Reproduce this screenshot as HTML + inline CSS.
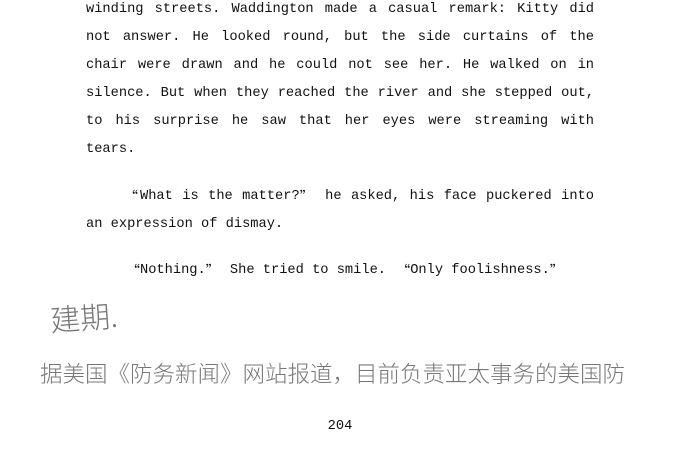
<!DOCTYPE html>
<html><head><meta charset="utf-8"><style>
html,body{margin:0;padding:0;background:#fff;width:680px;height:467px;overflow:hidden;position:relative}
.l{position:absolute;left:86px;width:508px;font-family:"Liberation Mono","Noto Sans CJK SC",monospace;font-size:13.7px;line-height:16px;height:16px;color:#111;white-space:nowrap}
.j{text-align:justify;text-align-last:justify;white-space:normal}
.q{display:inline-block;width:16px;height:16px;line-height:16px;vertical-align:top;font-family:"Noto Sans CJK SC",sans-serif;font-size:14px;overflow:hidden}
.o{text-align:right}.c{text-align:left}
.h{position:absolute;font-family:"Noto Sans CJK SC","WenQuanYi Zen Hei",sans-serif;color:#777;white-space:nowrap;font-weight:300}
</style></head><body>
<div class="l j" style="top:2px">winding streets. Waddington made a casual remark: Kitty did</div>
<div class="l j" style="top:30px">not answer. He looked round, but the side curtains of the</div>
<div class="l j" style="top:58px">chair were drawn and he could not see her. He walked on in</div>
<div class="l j" style="top:86px">silence. But when they reached the river and she stepped out,</div>
<div class="l j" style="top:114px">to his surprise he saw that her eyes were streaming with</div>
<div class="l" style="top:142px">tears.</div>
<div class="l j" style="top:189px;left:124px;width:470px"><span class="q o">“</span>What is the matter?<span class="q c">”</span> he asked, his face puckered into</div>
<div class="l" style="top:217px">an expression of dismay.</div>
<div class="l" style="top:263px;left:124px"><span class="q o">“</span>Nothing.<span class="q c">”</span> She tried to smile. <span class="q o">“</span>Only foolishness.<span class="q c">”</span></div>
<div class="h" style="left:50px;top:296px;font-size:30px;line-height:40px;transform:rotate(-4deg)">建期.</div>
<div class="h" style="left:40px;top:358px;font-size:22.5px;line-height:30px;letter-spacing:0">据美国《防务新闻》网站报道，目前负责亚太事务的美国防</div>
<div class="l" style="top:419px;left:0;width:680px;text-align:center">204</div>
</body></html>
